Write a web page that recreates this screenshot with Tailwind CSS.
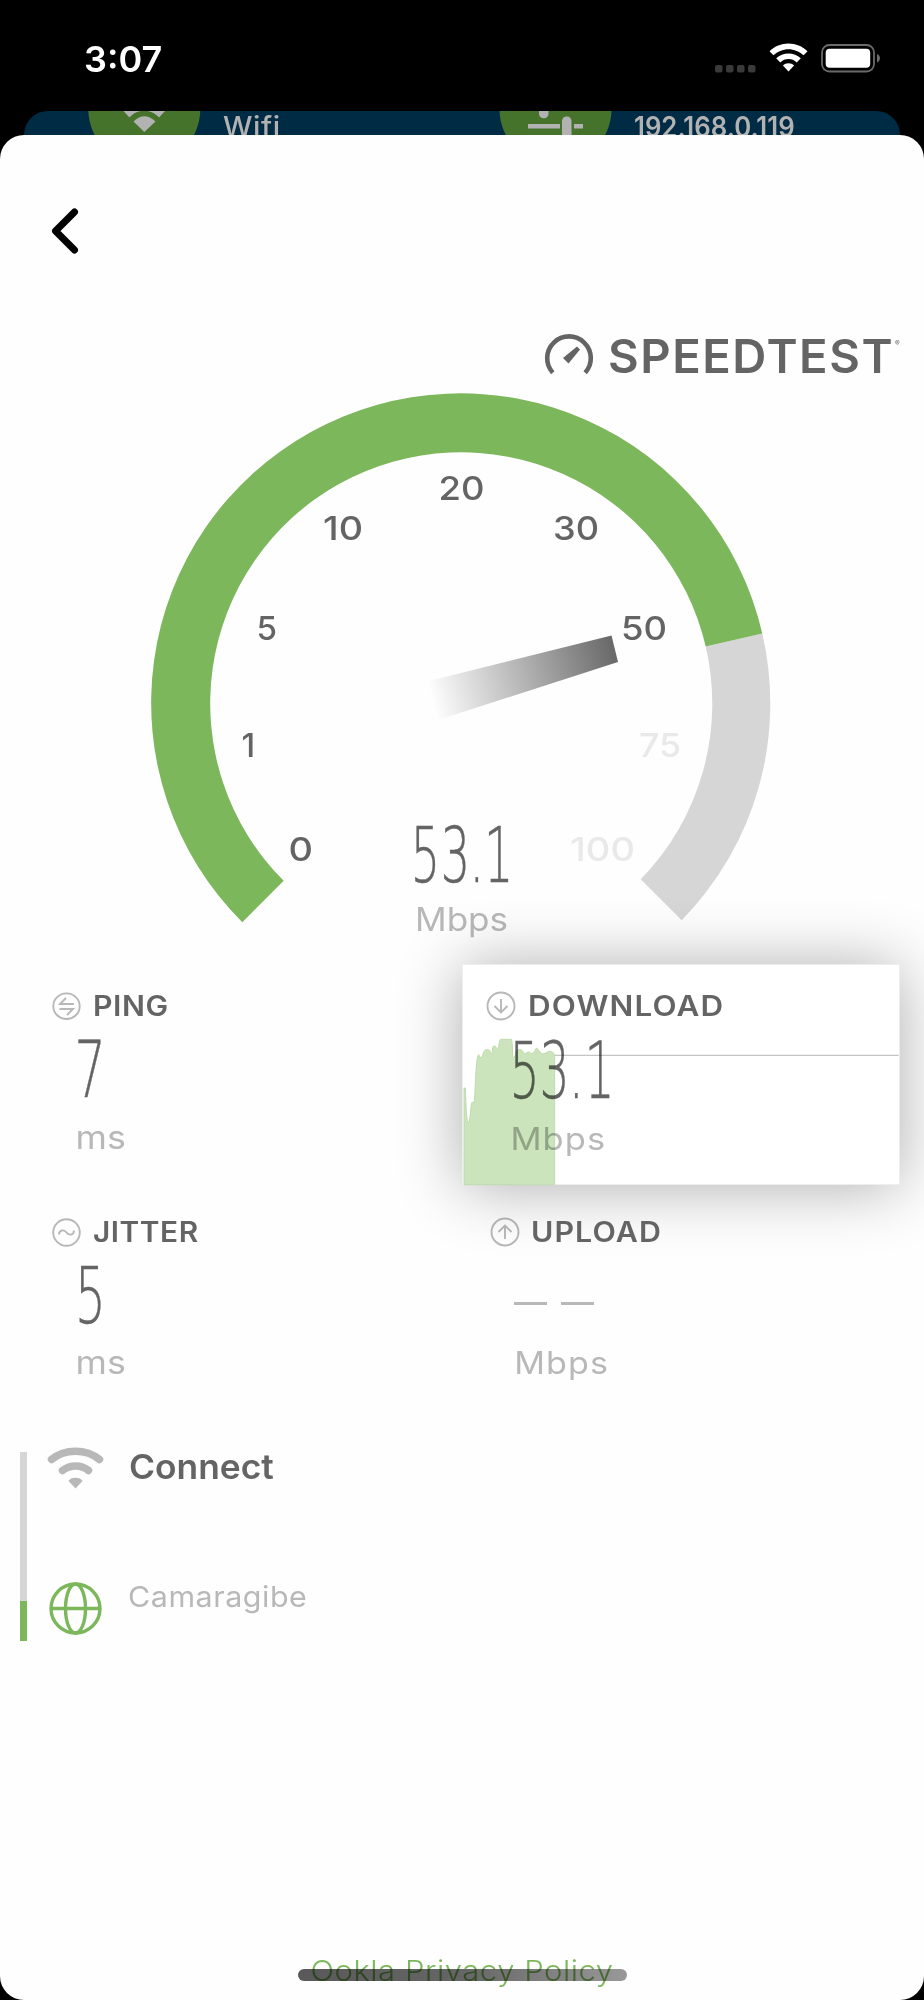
<!DOCTYPE html>
<html lang="en">
<head>
<meta charset="utf-8">
<title>Speedtest</title>
<script src="https://cdn.jsdelivr.net/npm/@tailwindcss/browser@4"></script>
</head>
<body class="bg-black font-['Inter','Liberation_Sans',sans-serif] text-[#646464]">
<div class="flex h-[2000px] w-[924px] flex-col overflow-hidden bg-black">

  <!-- Status bar -->
  <div class="flex h-[111px] shrink-0 items-start justify-between pt-[40px] pr-[43px] pl-[84px] text-white">
    <span class="text-[36px] leading-[38px] font-semibold">3:07</span>
    <div class="flex items-start pt-[3px]">
      <svg class="mt-[22px] mr-[13px]" width="41" height="8" viewBox="0 0 41 8" fill="#3a3a3a"><rect width="7.5" height="7.5" rx="2"/><rect x="11" width="7.5" height="7.5" rx="2"/><rect x="22" width="7.5" height="7.5" rx="2"/><rect x="33" width="7.5" height="7.5" rx="2"/></svg>
      <svg class="mr-[13px]" width="39" height="29" viewBox="0 0 39 29" fill="#fff"><path d="M19.5 0.5C26.500 0.500 33.500 3.300 38.500 8.200L34.500 12.300C30.500 8.500 25 6.200 19.500 6.200S8.500 8.500 4.500 12.300L.5 8.200C5.500 3.300 12.500.500 19.500.500Z"/><path d="M19.500 10.400C24 10.400 28.500 12.200 31.800 15.300L27.700 19.400C25.500 17.300 22.500 16.100 19.500 16.100S13.500 17.300 11.300 19.400L7.200 15.300C10.500 12.200 15 10.400 19.500 10.400Z"/><path d="M19.500 20.200C21.600 20.200 23.600 21 25.100 22.400L19.500 28.500L13.900 22.400C15.400 21 17.400 20.200 19.500 20.200Z"/></svg>
      <svg class="mt-[1px]" width="60" height="29" viewBox="0 0 60 29"><rect x="1" y="1" width="52" height="26.500" rx="7.500" fill="none" stroke="#6b6b6b" stroke-width="1.800"/><rect x="4.700" y="4.800" width="44.500" height="19" rx="4" fill="#fff"/><path d="M56 10C60 11.500 60 17 56 18.500Z" fill="#6b6b6b"/></svg>
    </div>
  </div>

  <!-- Page behind the sheet -->
  <div class="mx-[24px] flex h-[24px] shrink-0 items-start overflow-hidden rounded-t-[24px] bg-[#002b45] text-[28px] leading-[34px] font-medium text-[#b2b2b2]">
    <svg class="ml-[64px] shrink-0" width="113" height="24" viewBox="0 0 113 24"><circle cx="56.300" cy="-2" r="56" fill="#46732b"/><path d="M35.500 0H77L71 6.500Q65 0 56.300-.5Q47 0 41.500 6.500Z" fill="#b2b2b2"/><path d="M41.500 6.500Q56.300-6 71 6.500L67.500 10.500Q56.300 0 45.500 10.500Z" fill="#46732b"/><path d="M45.500 10.500Q56.300 0 67.500 10.500L56.300 21Z" fill="#b2b2b2"/></svg>
    <span class="-mt-px ml-[22px] w-[276px] shrink-0 origin-left scale-x-[1.05] tracking-[0.5px]">Wifi</span>
    <svg class="shrink-0" width="113" height="24" viewBox="0 0 113 24"><circle cx="56.500" cy="-2" r="56" fill="#46732b"/><g fill="#b2b2b2"><rect x="40" y="-10" width="9.500" height="17.300" rx="4.500"/><rect x="29" y="13" width="32" height="4.500"/><rect x="63" y="5.500" width="9.500" height="26" rx="4.500"/><rect x="75" y="13" width="9" height="4.500"/></g></svg>
    <span class="-mt-px ml-[22px] origin-left scale-x-[0.92] font-semibold">192.168.0.119</span>
  </div>

  <!-- Sheet -->
  <main class="flex grow flex-col rounded-[24px] bg-[#fefefe]">
    <button class="mt-[73px] ml-[50px] h-[46px] w-[30px]" aria-label="Back">
      <svg width="30" height="46" viewBox="0 0 30 46"><path d="M24.500 4L5.500 23L24.500 42" fill="none" stroke="#000" stroke-width="7" stroke-linecap="round" stroke-linejoin="round"/></svg>
    </button>

    <div class="mt-[80px] flex h-[42px] items-center pl-[544px]">
      <svg class="shrink-0" width="50" height="42" viewBox="0 0 50 42"><path d="M8.800 38.800A21.800 21.800 0 1 1 41.200 38.800" fill="none" stroke="#646464" stroke-width="4.600"/><path d="M33 12.500L36 15.500L24.500 29.500L19 24Z" fill="#646464"/></svg>
      <span class="ml-[14px] w-[287px] origin-left scale-x-[1.025] pt-[2px] text-[46px] leading-[42px] font-semibold tracking-[1.5px]">SPEEDTEST</span>
      <span class="mb-[24px] text-[7px] leading-none">®</span>
    </div>

    <!-- Speed gauge -->
    <svg class="block shrink-0" width="924" height="572" viewBox="0 376 924 572" font-family="Inter, 'Liberation Sans', sans-serif">
      <defs>
        <linearGradient id="needle" gradientUnits="userSpaceOnUse" x1="432" y1="700" x2="615" y2="649">
          <stop offset="0" stop-color="#fefefe"/><stop offset="1" stop-color="#686868"/>
        </linearGradient>
      </defs>
      <path d="M762.300 633.600A309.500 309.500 0 0 1 681.700 920.200L640.700 879.200A251 251 0 0 0 705.700 646.600Z" fill="#d6d6d6"/>
      <path d="M242.300 922.200A309.500 309.500 0 1 1 762.300 633.600L705.700 646.600A251 251 0 1 0 283.700 880.800Z" fill="#7db75b"/>
      <path d="M428 681.300L611.500 635.500L618 662L438 720Z" fill="url(#needle)"/>
      <g font-size="33" font-weight="500" fill="#646464">
        <text x="438.500" y="499.700" textLength="46" lengthAdjust="spacingAndGlyphs">20</text>
        <text x="323" y="540.300" textLength="40" lengthAdjust="spacingAndGlyphs">10</text>
        <text x="553" y="540.300" textLength="46" lengthAdjust="spacingAndGlyphs">30</text>
        <text x="256.500" y="639.700" textLength="20.500" lengthAdjust="spacingAndGlyphs">5</text>
        <text x="621" y="639.700" textLength="46" lengthAdjust="spacingAndGlyphs">50</text>
        <text x="241.500" y="757">1</text>
        <text x="288.500" y="860.700" textLength="24.500" lengthAdjust="spacingAndGlyphs">0</text>
        <g fill="#e9e9e9"><text x="639" y="757" textLength="42" lengthAdjust="spacingAndGlyphs">75</text>
        <text x="570" y="860.700" textLength="65" lengthAdjust="spacingAndGlyphs">100</text></g>
      </g>
      <text transform="translate(415 881.500) scale(.6 1)" x="-7 43 91 115" y="0" font-family="'DejaVu Sans'" font-weight="200" font-size="77" fill="#646464" stroke="#646464" stroke-width=".5">53.1</text>
      <text x="415" y="931" font-size="32" textLength="93" lengthAdjust="spacingAndGlyphs" fill="#b8b8b8">Mbps</text>
    </svg>

    <!-- Results -->
    <section class="mt-[16px] grid shrink-0 grid-cols-[462px_438px] grid-rows-[221px_221px] gap-y-[5px]">
      <div class="pt-[27px] pl-[52px]">
        <div class="flex h-[30px] items-center gap-[12px]">
          <svg width="29" height="29" viewBox="0 0 29 29" fill="none" stroke="#b8b8b8" stroke-width="1.900"><ellipse cx="14.500" cy="14.200" rx="13.200" ry="12.800"/><path d="M22 12H8L14 6M7.500 17H21L15 23"/></svg>
          <h2 class="origin-left scale-x-[1.08] text-[28px] leading-[30px] font-semibold tracking-[0.5px]">PING</h2>
        </div>
        <svg class="mt-[18px] ml-[17px] block overflow-visible" width="60" height="60" viewBox="0 0 60 60"><text transform="translate(6 58) scale(.63 1)" x="-1" font-family="'DejaVu Sans'" font-weight="200" font-size="78" fill="#646464" stroke="#646464" stroke-width=".5">7</text></svg>
        <p class="mt-[23px] origin-left scale-x-[1.12] pl-[21px] text-[32px] leading-[32px] text-[#b8b8b8]">ms</p>
      </div>

      <div class="relative border border-[#eeeeee] bg-white pt-[26px] pl-[23px] shadow-[0_2px_60px_rgba(0,0,0,0.32)]">
        <svg class="absolute inset-0" width="437" height="221" viewBox="69 76 1311 663"><path d="M72 735V445H76C78 490 79 545 85 549C92 545 92 490 96 488H103C107 440 107 350 116 345L120 353Q126 357 129 342Q134 328 142 330Q150 328 152 340Q156 350 158 325Q161 313 167 322Q174 333 176 320Q179 300 182 299H214Q217 300 218 350Q225 360 228 335L235 330Q248 328 250 340Q256 345 262 338Q268 335 272 341Q281 345 285 333Q289 320 294 329Q300 341 308 343L318 340Q330 330 338 338Q343 340 344 350V735Z" fill="#cbe4bb" stroke="#bfdcae" stroke-width="3"/><path d="M345 347H1376" stroke="#c4c4c4" stroke-width="4"/></svg>
        <div class="relative mix-blend-multiply">
          <div class="flex h-[30px] items-center gap-[12px]">
            <svg width="30" height="30" viewBox="0 0 30 30" fill="none" stroke="#b8b8b8" stroke-width="1.900"><circle cx="15" cy="15" r="13.500"/><path d="M15 8V21.500M8.500 15L15 21.500L21.500 15"/></svg>
            <h2 class="origin-left scale-x-[1.12] text-[28px] leading-[30px] font-semibold tracking-[1px]">DOWNLOAD</h2>
          </div>
          <svg class="mt-[18px] ml-[17px] block overflow-visible" width="130" height="61" viewBox="0 0 130 61"><text transform="translate(7 59) scale(.6 1)" x="-1 49 98 124" font-family="'DejaVu Sans'" font-weight="200" font-size="79" fill="#646464" stroke="#646464" stroke-width=".5">53.1</text></svg>
          <p class="mt-[23px] origin-left scale-x-[1.11] pl-[22px] text-[31px] leading-[32px] tracking-[1px] text-[#b8b8b8]">Mbps</p>
        </div>
      </div>

      <div class="pt-[27px] pl-[52px]">
        <div class="flex h-[30px] items-center gap-[12px]">
          <svg width="29" height="29" viewBox="0 0 29 29" fill="none" stroke="#b8b8b8" stroke-width="1.900"><circle cx="14.500" cy="14.500" r="13.300"/><path d="M7 16.500C7 12 12 11 14.500 14.500S22 17 22 12.500"/></svg>
          <h2 class="origin-left scale-x-[1.065] text-[28px] leading-[28px] font-semibold tracking-[0.5px]">JITTER</h2>
        </div>
        <svg class="mt-[18px] ml-[17px] block overflow-visible" width="60" height="60" viewBox="0 0 60 60"><text transform="translate(6 57.500) scale(.62 1)" x="0" font-family="'DejaVu Sans'" font-weight="200" font-size="78" fill="#646464" stroke="#646464" stroke-width=".5">5</text></svg>
        <p class="mt-[22px] origin-left scale-x-[1.12] pl-[21px] text-[32px] leading-[32px] text-[#b8b8b8]">ms</p>
      </div>

      <div class="pt-[27px] pl-[28px]">
        <div class="flex h-[30px] items-center gap-[11px]">
          <svg width="30" height="30" viewBox="0 0 30 30" fill="none" stroke="#b8b8b8" stroke-width="1.900"><circle cx="15" cy="15" r="13.500"/><path d="M15 22V8.500M8.500 15L15 8.500L21.500 15"/></svg>
          <h2 class="origin-left scale-x-[1.085] text-[28px] leading-[28px] font-semibold tracking-[1px]">UPLOAD</h2>
        </div>
        <div class="mt-[55px] mb-[42px] ml-[24px] flex gap-[14px]"><span class="h-[2.500px] w-[33px] bg-[#b8b8b8]"></span><span class="h-[2.500px] w-[33px] bg-[#b8b8b8]"></span></div>
        <p class="origin-left scale-x-[1.1] pl-[22px] text-[31px] leading-[32px] tracking-[1px] text-[#b8b8b8]">Mbps</p>
      </div>
    </section>

    <!-- Connection -->
    <section class="mt-[36px] flex h-[194px] shrink-0 pl-[20px]">
      <div class="mt-[5px] flex h-[189px] w-[7px] flex-col"><div class="grow bg-[#d6d6d6]"></div><div class="h-[40px] bg-[#7db75b]"></div></div>
      <div class="ml-[20px] flex flex-col">
        <div class="flex gap-[24px]">
          <svg width="58" height="42" viewBox="0 0 58 42" fill="none" stroke="#b8b8b8" stroke-linecap="round" stroke-width="7.500"><path d="M4.500 12.500C18 1.500 39 1.500 52.500 12.500M15.500 23.500C23.500 17.500 34 17.500 41.500 23.500"/><path d="M21.500 34C23 29.500 34 29.500 35.500 34L28.500 41.500Z" fill="#b8b8b8" stroke="none"/></svg>
          <p class="origin-left scale-x-[1.04] pt-[3px] text-[34px] leading-[34px] font-semibold">Connect</p>
        </div>
        <div class="mt-[93px] flex gap-[26px] pl-[2px]">
          <svg width="53" height="53" viewBox="0 0 53 53" fill="none" stroke="#7db75b" stroke-width="3.400"><circle cx="26.500" cy="26.500" r="24.500"/><ellipse cx="26.500" cy="26.500" rx="10" ry="24.500"/><path d="M2 26.500H51"/></svg>
          <p class="origin-left scale-x-[1.05] text-[29px] leading-[30px] tracking-[0.5px] text-[#b8b8b8]">Camaragibe</p>
        </div>
      </div>
    </section>

    <footer class="relative mt-auto h-[57px] text-center">
      <a class="block scale-x-[1.07] text-[29px] leading-[56px] font-light tracking-[0.5px] text-[#7db75b]">Ookla Privacy Policy</a>
      <div class="absolute top-[26px] left-[298px] h-[12px] w-[329px] rounded-full bg-linear-to-r from-black/65 via-black/60 to-black/40"></div>
    </footer>
  </main>
</div>
</body>
</html>
